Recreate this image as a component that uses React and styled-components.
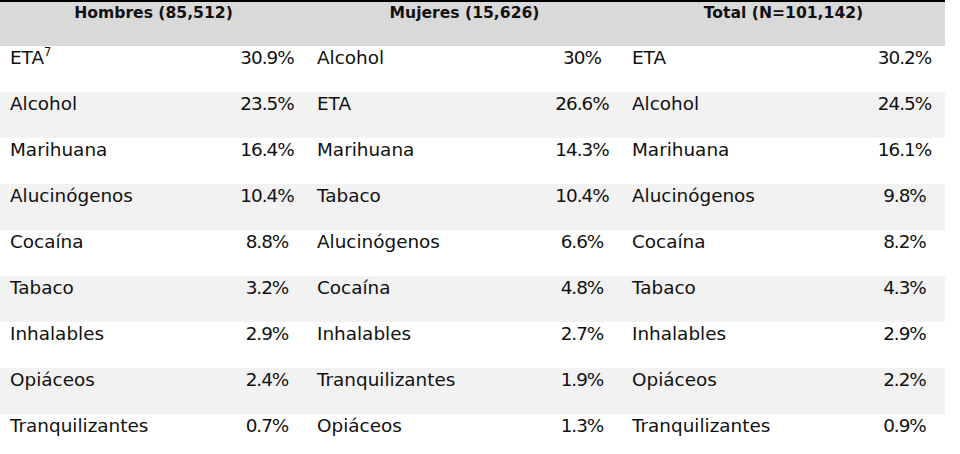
import React from 'react';
import styled, { createGlobalStyle } from 'styled-components';

const GlobalStyle = createGlobalStyle`
  html, body {
    margin: 0;
    padding: 0;
    background: #ffffff;
  }
  body {
    font-family: "DejaVu Sans", "Liberation Sans", sans-serif;
    color: #111111;
  }
`;

const COLUMNS = '227px 80px 235px 80px 242px 81px';

const Table = styled.div`
  width: 945px;
  border-top: 2px solid #000000;
`;

const HeaderRow = styled.div`
  display: grid;
  grid-template-columns: ${COLUMNS};
  height: 44px;
  background: #d9d9d9;
`;

const HeaderCell = styled.div`
  grid-column: span 2;
  text-align: center;
  font-weight: bold;
  font-size: 15.6px;
  line-height: 22px;
`;

const Row = styled.div`
  display: grid;
  grid-template-columns: ${COLUMNS};
  height: 46px;
  background: ${({ $shaded }) => ($shaded ? '#f2f2f2' : '#ffffff')};
`;

const Label = styled.div`
  padding-left: 10px;
  font-size: 18.4px;
  line-height: 23px;
  white-space: nowrap;
`;

const Value = styled.div`
  text-align: center;
  font-size: 18.4px;
  line-height: 23px;
  letter-spacing: -1px;
  white-space: nowrap;
`;

const Note = styled.sup`
  font-size: 0.62em;
  line-height: 0;
  vertical-align: 0.72em;
`;

const groups = ['Hombres (85,512)', 'Mujeres (15,626)', 'Total (N=101,142)'];

const rows = [
  [['ETA', '30.9%', '7'], ['Alcohol', '30%'], ['ETA', '30.2%']],
  [['Alcohol', '23.5%'], ['ETA', '26.6%'], ['Alcohol', '24.5%']],
  [['Marihuana', '16.4%'], ['Marihuana', '14.3%'], ['Marihuana', '16.1%']],
  [['Alucinógenos', '10.4%'], ['Tabaco', '10.4%'], ['Alucinógenos', '9.8%']],
  [['Cocaína', '8.8%'], ['Alucinógenos', '6.6%'], ['Cocaína', '8.2%']],
  [['Tabaco', '3.2%'], ['Cocaína', '4.8%'], ['Tabaco', '4.3%']],
  [['Inhalables', '2.9%'], ['Inhalables', '2.7%'], ['Inhalables', '2.9%']],
  [['Opiáceos', '2.4%'], ['Tranquilizantes', '1.9%'], ['Opiáceos', '2.2%']],
  [['Tranquilizantes', '0.7%'], ['Opiáceos', '1.3%'], ['Tranquilizantes', '0.9%']],
];

export default function App() {
  return (
    <>
      <GlobalStyle />
      <Table>
        <HeaderRow>
          {groups.map((g) => (
            <HeaderCell key={g}>{g}</HeaderCell>
          ))}
        </HeaderRow>
        {rows.map((row, i) => (
          <Row key={i} $shaded={i % 2 === 1}>
            {row.map(([name, pct, note], j) => (
              <React.Fragment key={j}>
                <Label>
                  {name}
                  {note && <Note>{note}</Note>}
                </Label>
                <Value>{pct}</Value>
              </React.Fragment>
            ))}
          </Row>
        ))}
      </Table>
    </>
  );
}
